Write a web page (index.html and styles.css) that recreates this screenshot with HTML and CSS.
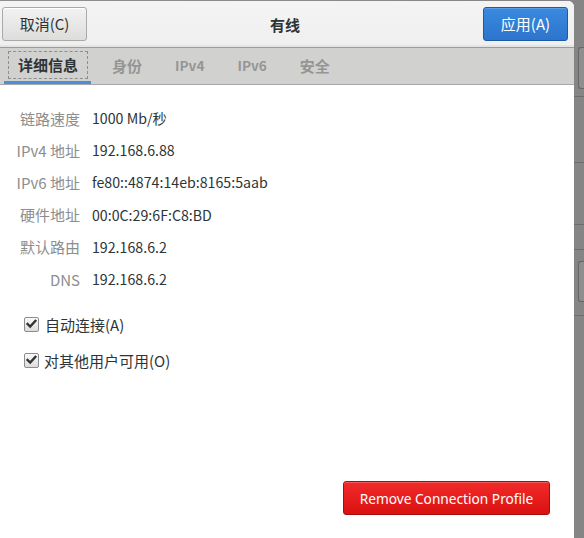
FILE: index.html
```html
<!DOCTYPE html>
<html lang="zh">
<head>
<meta charset="utf-8">
<title>有线</title>
<link rel="stylesheet" href="styles.css">
</head>
<body>
<div class="screen">
  <div class="dialog">
    <header class="header">
      <button class="btn btn-cancel">取消(C)</button>
      <div class="title">有线</div>
      <button class="btn btn-apply">应用(A)</button>
    </header>
    <nav class="tabs">
      <div class="tab active"><span class="focus">详细信息</span></div>
      <div class="tab">身份</div>
      <div class="tab latin">IPv4</div>
      <div class="tab latin">IPv6</div>
      <div class="tab">安全</div>
    </nav>
    <main class="content">
      <div class="details">
        <div class="label">链路速度</div><div class="value">1000 Mb/秒</div>
        <div class="label">IPv4 地址</div><div class="value">192.168.6.88</div>
        <div class="label">IPv6 地址</div><div class="value">fe80::4874:14eb:8165:5aab</div>
        <div class="label">硬件地址</div><div class="value">00:0C:29:6F:C8:BD</div>
        <div class="label">默认路由</div><div class="value">192.168.6.2</div>
        <div class="label">DNS</div><div class="value">192.168.6.2</div>
      </div>
      <div class="checks">
        <label class="check">
          <span class="box"><svg viewBox="0 0 14 14" width="14" height="14"><path d="M2.8 7 L5.6 9.8 L11.2 3.6" fill="none" stroke="#2e3436" stroke-width="2.6" stroke-linecap="square"/></svg></span>
          <span class="check-text first">自动连接(A)</span>
        </label>
        <label class="check">
          <span class="box"><svg viewBox="0 0 14 14" width="14" height="14"><path d="M2.8 7 L5.6 9.8 L11.2 3.6" fill="none" stroke="#2e3436" stroke-width="2.6" stroke-linecap="square"/></svg></span>
          <span class="check-text">对其他用户可用(O)</span>
        </label>
      </div>
      <button class="btn btn-remove">Remove Connection Profile</button>
    </main>
  </div>
  <div class="backdrop">
    <div class="bd-space h47"></div>
    <div class="bd-button h42"></div>
    <div class="bd-space h7"></div>
    <div class="bd-line"></div>
    <div class="bd-space h65"></div>
    <div class="bd-line"></div>
    <div class="bd-space h61"></div>
    <div class="bd-line"></div>
    <div class="bd-space h24"></div>
    <div class="bd-line"></div>
    <div class="bd-space h11"></div>
    <div class="bd-button h41"></div>
    <div class="bd-space h13"></div>
    <div class="bd-line"></div>
  </div>
</div>
</body>
</html>
```

FILE: styles.css
```css
* { box-sizing: border-box; }

html, body {
  margin: 0;
  padding: 0;
}

body {
  width: 584px;
  height: 538px;
  overflow: hidden;
  background: #8a8a8a;
  font-family: "Noto Sans CJK SC", "Noto Sans", sans-serif;
  font-size: 15px;
  color: #2e3436;
}

.screen {
  display: flex;
  width: 584px;
  height: 538px;
  background: linear-gradient(to right, #8f8f8f, #858585);
}

.dialog {
  width: 574px;
  height: 537px;
  margin-top: 1px;
  display: flex;
  flex-direction: column;
  background: #ffffff;
  border-top-right-radius: 6px;
  overflow: hidden;
}

.header {
  height: 47px;
  flex: none;
  display: flex;
  align-items: center;
  justify-content: space-between;
  padding: 0 6px 0 2px;
  background: linear-gradient(to bottom, #f4f4f4, #efefef);
  border-bottom: 1px solid #9b9b9b;
  box-shadow: inset 0 -2px 0 #e4e4e4;
}

.btn {
  font-family: "Noto Sans CJK SC", "Noto Sans", sans-serif;
  font-size: 15px;
  cursor: default;
}

.btn-cancel,
.btn-apply {
  width: 85px;
  height: 34px;
  margin-top: -1px;
  border-radius: 3px;
  padding: 0;
}

.btn-cancel {
  color: #2e3436;
  background: linear-gradient(to bottom, #f2f2f2, #dddddc);
  border: 1px solid #a9a9a9;
  box-shadow: inset 0 1px 0 #ffffff;
}

.btn-apply {
  color: #ffffff;
  background: linear-gradient(to bottom, #3a8ae0, #2d74cc);
  border: 1px solid #1b5aa6;
  box-shadow: inset 0 1px 0 #5a9fe8;
}

.title {
  font-weight: bold;
  font-size: 15px;
  color: #2e3436;
}

.tabs {
  height: 37px;
  flex: none;
  display: flex;
  align-items: stretch;
  gap: 9px;
  padding-left: 4px;
  background: #d1d1cf;
  border-bottom: 1px solid #a7a7a5;
}

.tab {
  display: flex;
  align-items: center;
  padding: 0 12px 2px;
  font-weight: bold;
  font-size: 15px;
  color: #959595;
}

.tab.latin {
  font-size: 13.6px;
}

.tab.active {
  color: #2e3436;
  padding: 0 3px 2px 4px;
  box-shadow: inset 0 -3px 0 #4a90d9;
}

.focus {
  display: block;
  padding: 3px 9px;
  border: 1px dashed #8e8e8e;
  line-height: 20px;
}

.content {
  flex: 1;
  display: flex;
  flex-direction: column;
  background: #ffffff;
  padding-top: 17px;
}

.details {
  display: grid;
  grid-template-columns: 80px auto;
  column-gap: 12px;
  grid-auto-rows: 32.2px;
  align-items: center;
}

.label {
  text-align: right;
  color: #8b8e8f;
}

.value {
  color: #2e3436;
  font-size: 14.2px;
}

.checks {
  display: flex;
  flex-direction: column;
  margin-top: 11px;
  padding-left: 24px;
}

.check {
  height: 36px;
  display: flex;
  align-items: center;
  gap: 5px;
}

.box {
  width: 15px;
  height: 15px;
  display: flex;
  align-items: center;
  justify-content: center;
  border: 1px solid #8c8c8c;
  border-radius: 2px;
  background: linear-gradient(to bottom, #fafafa, #dcdcdc);
}

.check-text {
  color: #2e3436;
}

.check-text.first {
  margin-left: 1px;
}

.btn-remove {
  margin-top: auto;
  align-self: flex-end;
  margin-right: 24px;
  margin-bottom: 23px;
  width: 207px;
  height: 34px;
  padding: 0;
  border-radius: 3px;
  color: #ffffff;
  font-family: "Noto Sans", sans-serif;
  font-size: 13.7px;
  background: linear-gradient(to bottom, #f12a2a, #da1111);
  border: 1px solid #a80d0d;
  box-shadow: inset 0 1px 0 #f55a5a;
}

.backdrop {
  width: 10px;
  flex: none;
  display: flex;
  flex-direction: column;
}

.bd-space { flex: none; }
.h7 { height: 7px; }
.h11 { height: 11px; }
.h13 { height: 13px; }
.h24 { height: 24px; }
.h41 { height: 41px; }
.h42 { height: 42px; }
.h47 { height: 47px; }
.h61 { height: 61px; }
.h65 { height: 65px; }

.bd-line {
  height: 1px;
  background: #6c6c6c;
}

.bd-button {
  margin-left: 4px;
  border: 1px solid #666666;
  border-right: none;
  border-radius: 3px 0 0 3px;
  background: #8e8e8e;
}
```
